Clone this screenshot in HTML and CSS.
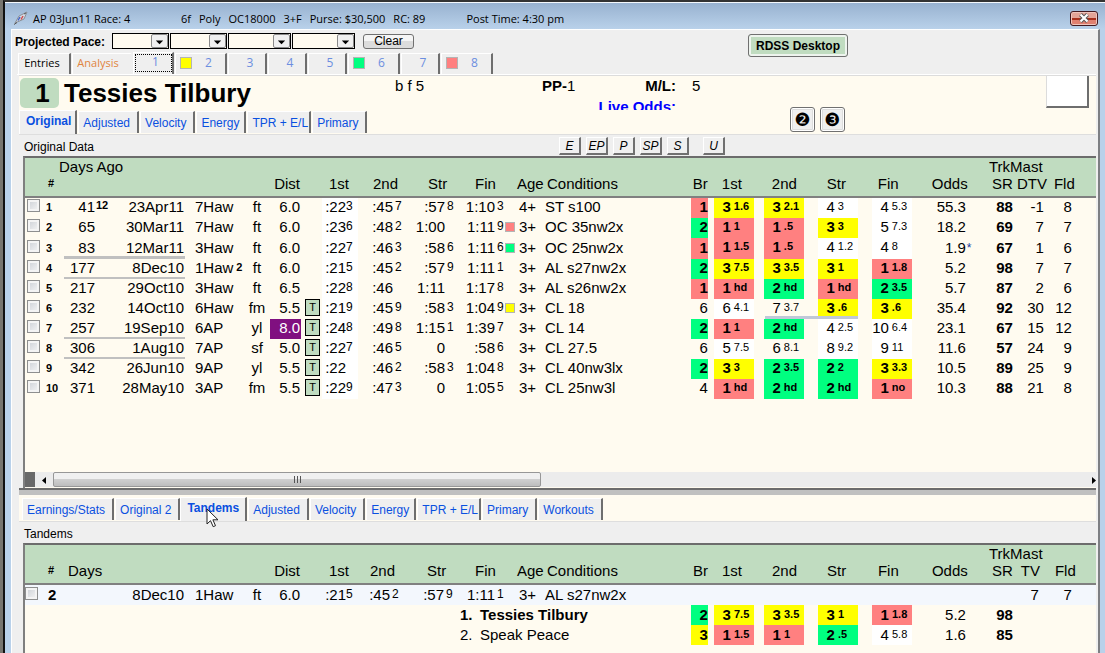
FILE: index.html
```
<!DOCTYPE html>
<html lang="en">
<head>
  <meta charset="UTF-8">
  <title>AP 03Jun11 Race: 4</title>
  <link rel="stylesheet" href="styles.css">
</head>
<body>

<div class="window">

  <header class="titlebar">
    <svg class="app-icon" width="14" height="14" viewBox="0 0 14 14">
      <path d="M1 12 L5 5 L13 1 L10 8 Z" fill="#d5dce4" stroke="#8a8f96"/>
      <path d="M4 9.500 L6 6" stroke="#3f62c8" stroke-width="1.500"/>
      <path d="M7 8.500 L9 5" stroke="#d04a4a" stroke-width="1.500"/>
      <path d="M0 13.500 L3 11.500 M10 3 L12 2" stroke="#555"/>
    </svg>
    <span class="race-id">AP 03Jun11 Race: 4</span>
    <div class="race-facts">
      <span>6f</span><span>Poly</span><span>OC18000</span><span>3+F</span><span>Purse: $30,500</span><span>RC: 89</span>
    </div>
    <span class="post">Post Time: 4:30 pm</span>
    <button class="close" title="Close">
      <svg width="12" height="10" viewBox="0 0 12 10">
        <path d="M2.500 1.500 L9.500 8.500 M9.500 1.500 L2.500 8.500" stroke="#555" stroke-width="4"/>
        <path d="M2.500 1.500 L9.500 8.500 M9.500 1.500 L2.500 8.500" stroke="#fff" stroke-width="2.200"/>
      </svg>
    </button>
  </header>

  <main class="client">

    <div class="toolbar">
      <span class="pace-label" id="pace">Projected Pace:</span>
      <span class="combo"><select aria-labelledby="pace"><option></option></select><svg viewBox="0 0 16 13"><path d="M4 6h8l-4 4z"/></svg></span>
      <span class="combo"><select aria-labelledby="pace"><option></option></select><svg viewBox="0 0 16 13"><path d="M4 6h8l-4 4z"/></svg></span>
      <span class="combo wide"><select aria-labelledby="pace"><option></option></select><svg viewBox="0 0 16 13"><path d="M4 6h8l-4 4z"/></svg></span>
      <span class="combo wide"><select aria-labelledby="pace"><option></option></select><svg viewBox="0 0 16 13"><path d="M4 6h8l-4 4z"/></svg></span>
      <button class="clear">Clear</button>
      <button class="desktop">RDSS Desktop</button>
    </div>

    <nav class="tabs race-tabs">
      <button class="tab entries">Entries</button>
      <button class="tab analysis">Analysis</button>
      <button class="tab horse active">1</button>
      <button class="tab horse marked"><i class="mark yellow"></i>2</button>
      <button class="tab horse">3</button>
      <button class="tab horse">4</button>
      <button class="tab horse">5</button>
      <button class="tab horse marked"><i class="mark green"></i>6</button>
      <button class="tab horse">7</button>
      <button class="tab horse marked"><i class="mark red"></i>8</button>
    </nav>

    <section class="runner">
      <div class="runner-main">
        <div class="nameplate"><span class="badge">1</span><h1>Tessies Tilbury</h1></div>
        <nav class="tabs view-tabs">
          <button class="tab active">Original</button>
          <button class="tab">Adjusted</button>
          <button class="tab">Velocity</button>
          <button class="tab snug">Energy</button>
          <button class="tab tight">TPR + E/L</button>
          <button class="tab">Primary</button>
        </nav>
      </div>
      <span class="breed">b f 5</span>
      <span class="pp"><b>PP-</b>1</span>
      <div class="odds-labels">
        <b>M/L:</b>
        <b class="live">Live Odds:</b>
      </div>
      <span class="ml">5</span>
      <div class="views">
        <button>&#10103;</button>
        <button>&#10104;</button>
      </div>
      <div class="silks"></div>
    </section>

    <div class="caption">
      <span>Original Data</span>
      <div class="styles">
        <button>E</button>
        <button>EP</button>
        <button>P</button>
        <button>SP</button>
        <button>S</button>
        <button>U</button>
      </div>
    </div>

    <div class="list main-list">
      <table>
        <colgroup>
          <col class="c-check"><col class="c-num"><col class="c-days"><col class="c-note"><col class="c-date"><col class="c-track"><col class="c-surf"><col class="c-dist"><col class="c-turf">
          <col class="c-t1"><col class="c-t2"><col class="c-t3"><col class="c-t4"><col class="c-mark"><col class="c-age"><col class="c-cond"><col class="c-br">
          <col class="c-p1"><col class="c-p2"><col class="c-p3"><col class="c-p3"><col class="c-odds"><col class="c-star"><col class="c-sr"><col class="c-dtv"><col class="c-fld"><col class="c-end">
        </colgroup>
        <thead>
          <tr class="upper">
            <th></th><th colspan="22" class="ago">Days Ago</th><th colspan="4" class="trk">TrkMast</th>
          </tr>
          <tr>
            <th></th><th class="hash">#</th><th colspan="5"></th><th class="dist">Dist</th><th></th>
            <th class="h1">1st</th><th class="h2">2nd</th><th class="h3">Str</th><th class="h4">Fin</th><th></th><th>Age</th><th class="hc">Conditions</th><th class="r">Br</th>
            <th class="q1">1st</th><th class="q2">2nd</th><th class="q3">Str</th><th class="q4">Fin</th><th colspan="2" class="hodds">Odds</th><th class="r">SR</th><th class="hdtv">DTV</th><th class="hfld">Fld</th><th></th>
          </tr>
        </thead>
        <tbody>
          <tr>
            <td><input type="checkbox" aria-label="Race 1"></td><td class="num">1</td><td class="r">41</td><td class="note">12</td><td class="date">23Apr11</td><td class="track">7Haw</td><td class="surf">ft</td><td class="dist">6.0</td><td></td>
            <td class="t t1"><span>:22</span><sup>3</sup></td><td class="t t2"><span>:45</span><sup>7</sup></td><td class="t t3"><span>:57</span><sup>8</sup></td><td class="t t4"><span>1:10</span><sup>3</sup></td><td></td><td class="age">4+</td><td class="cond">ST s100</td><td class="br red">1</td>
            <td class="p p1"><div class="yellow"><span>3</span><sup>1.6</sup></div></td><td class="p p2"><div class="yellow"><span>3</span><sup>2.1</sup></div></td><td class="p p3"><div class="white"><span>4</span><sup>3</sup></div></td><td class="p p3"><div class="white"><span>4</span><sup>5.3</sup></div></td>
            <td class="r">55.3</td><td></td><td class="sr">88</td><td class="r">-1</td><td class="r">8</td><td></td>
          </tr>
          <tr>
            <td><input type="checkbox" aria-label="Race 2"></td><td class="num">2</td><td class="r">65</td><td></td><td class="date">30Mar11</td><td class="track">7Haw</td><td class="surf">ft</td><td class="dist">6.0</td><td></td>
            <td class="t t1"><span>:23</span><sup>6</sup></td><td class="t t2"><span>:48</span><sup>2</sup></td><td class="t t3"><span>1:00</span></td><td class="t t4"><span>1:11</span><sup>9</sup></td><td><i class="mark red"></i></td><td class="age">3+</td><td class="cond">OC 35nw2x</td><td class="br green">2</td>
            <td class="p p1"><div class="red"><span>1</span><sup>1</sup></div></td><td class="p p2"><div class="red"><span>1</span><sup>.5</sup></div></td><td class="p p3"><div class="yellow"><span>3</span><sup>3</sup></div></td><td class="p p3"><div class="white"><span>5</span><sup>7.3</sup></div></td>
            <td class="r">18.2</td><td></td><td class="sr">69</td><td class="r">7</td><td class="r">7</td><td></td>
          </tr>
          <tr class="month">
            <td><input type="checkbox" aria-label="Race 3"></td><td class="num">3</td><td class="r gap">83</td><td class="gap"></td><td class="date gap">12Mar11</td><td class="track">3Haw</td><td class="surf">ft</td><td class="dist">6.0</td><td></td>
            <td class="t t1"><span>:22</span><sup>7</sup></td><td class="t t2"><span>:46</span><sup>3</sup></td><td class="t t3"><span>:58</span><sup>6</sup></td><td class="t t4"><span>1:11</span><sup>6</sup></td><td><i class="mark green"></i></td><td class="age">3+</td><td class="cond">OC 25nw2x</td><td class="br red">1</td>
            <td class="p p1"><div class="red"><span>1</span><sup>1.5</sup></div></td><td class="p p2"><div class="red"><span>1</span><sup>.5</sup></div></td><td class="p p3"><div class="white"><span>4</span><sup>1.2</sup></div></td><td class="p p3"><div class="white"><span>4</span><sup>8</sup></div></td>
            <td class="r">1.9</td><td class="star">*</td><td class="sr">67</td><td class="r">1</td><td class="r">6</td><td></td>
          </tr>
          <tr>
            <td><input type="checkbox" aria-label="Race 4"></td><td class="num">4</td><td class="r line">177</td><td class="line"></td><td class="date line">8Dec10</td><td class="track">1Haw<sup>2</sup></td><td class="surf">ft</td><td class="dist">6.0</td><td></td>
            <td class="t t1"><span>:21</span><sup>5</sup></td><td class="t t2"><span>:45</span><sup>2</sup></td><td class="t t3"><span>:57</span><sup>9</sup></td><td class="t t4"><span>1:11</span><sup>1</sup></td><td></td><td class="age">3+</td><td class="cond">AL s27nw2x</td><td class="br green">2</td>
            <td class="p p1"><div class="yellow"><span>3</span><sup>7.5</sup></div></td><td class="p p2"><div class="yellow"><span>3</span><sup>3.5</sup></div></td><td class="p p3"><div class="yellow"><span>3</span><sup>1</sup></div></td><td class="p p3"><div class="red"><span>1</span><sup>1.8</sup></div></td>
            <td class="r">5.2</td><td></td><td class="sr">98</td><td class="r">7</td><td class="r">7</td><td></td>
          </tr>
          <tr>
            <td><input type="checkbox" aria-label="Race 5"></td><td class="num">5</td><td class="r">217</td><td></td><td class="date">29Oct10</td><td class="track">3Haw</td><td class="surf">ft</td><td class="dist">6.5</td><td></td>
            <td class="t t1"><span>:22</span><sup>8</sup></td><td class="t t2"><span>:46</span></td><td class="t t3"><span>1:11</span></td><td class="t t4"><span>1:17</span><sup>8</sup></td><td></td><td class="age">3+</td><td class="cond">AL s26nw2x</td><td class="br red">1</td>
            <td class="p p1"><div class="red"><span>1</span><sup>hd</sup></div></td><td class="p p2"><div class="green"><span>2</span><sup>hd</sup></div></td><td class="p p3"><div class="red"><span>1</span><sup>hd</sup></div></td><td class="p p3"><div class="green"><span>2</span><sup>3.5</sup></div></td>
            <td class="r">5.7</td><td></td><td class="sr">87</td><td class="r">2</td><td class="r">6</td><td></td>
          </tr>
          <tr>
            <td><input type="checkbox" aria-label="Race 6"></td><td class="num">6</td><td class="r">232</td><td></td><td class="date">14Oct10</td><td class="track">6Haw</td><td class="surf">fm</td><td class="dist">5.5</td><td><span class="turf">T</span></td>
            <td class="t t1"><span>:21</span><sup>9</sup></td><td class="t t2"><span>:45</span><sup>9</sup></td><td class="t t3"><span>:58</span><sup>3</sup></td><td class="t t4"><span>1:04</span><sup>9</sup></td><td><i class="mark yellow"></i></td><td class="age">3+</td><td class="cond">CL 18</td><td class="br">6</td>
            <td class="p p1"><div class="white"><span>6</span><sup>4.1</sup></div></td><td class="p p2 trouble"><div><span>7</span><sup>3.7</sup></div></td><td class="p p3 trouble"><div class="yellow"><span>3</span><sup>.6</sup></div></td><td class="p p3"><div class="yellow"><span>3</span><sup>.6</sup></div></td>
            <td class="r">35.4</td><td></td><td class="sr">92</td><td class="r">30</td><td class="r">12</td><td></td>
          </tr>
          <tr>
            <td><input type="checkbox" aria-label="Race 7"></td><td class="num">7</td><td class="r line">257</td><td class="line"></td><td class="date line">19Sep10</td><td class="track">6AP</td><td class="surf">yl</td><td class="dist route">8.0</td><td><span class="turf">T</span></td>
            <td class="t t1"><span>:24</span><sup>8</sup></td><td class="t t2"><span>:49</span><sup>8</sup></td><td class="t t3"><span>1:15</span><sup>1</sup></td><td class="t t4"><span>1:39</span><sup>7</sup></td><td></td><td class="age">3+</td><td class="cond">CL 14</td><td class="br green">2</td>
            <td class="p p1"><div class="red"><span>1</span><sup>1</sup></div></td><td class="p p2"><div class="green"><span>2</span><sup>hd</sup></div></td><td class="p p3"><div class="white"><span>4</span><sup>2.5</sup></div></td><td class="p p3"><div class="white"><span>10</span><sup>6.4</sup></div></td>
            <td class="r">23.1</td><td></td><td class="sr">67</td><td class="r">15</td><td class="r">12</td><td></td>
          </tr>
          <tr>
            <td><input type="checkbox" aria-label="Race 8"></td><td class="num">8</td><td class="r line">306</td><td class="line"></td><td class="date line">1Aug10</td><td class="track">7AP</td><td class="surf">sf</td><td class="dist">5.0</td><td><span class="turf">T</span></td>
            <td class="t t1"><span>:22</span><sup>7</sup></td><td class="t t2"><span>:46</span><sup>5</sup></td><td class="t t3"><span>0</span></td><td class="t t4"><span>:58</span><sup>6</sup></td><td></td><td class="age">3+</td><td class="cond">CL 27.5</td><td class="br">6</td>
            <td class="p p1"><div class="white"><span>5</span><sup>7.5</sup></div></td><td class="p p2"><div><span>6</span><sup>8.1</sup></div></td><td class="p p3"><div class="white"><span>8</span><sup>9.2</sup></div></td><td class="p p3"><div class="white"><span>9</span><sup>11</sup></div></td>
            <td class="r">11.6</td><td></td><td class="sr">57</td><td class="r">24</td><td class="r">9</td><td></td>
          </tr>
          <tr>
            <td><input type="checkbox" aria-label="Race 9"></td><td class="num">9</td><td class="r">342</td><td></td><td class="date">26Jun10</td><td class="track">9AP</td><td class="surf">yl</td><td class="dist">5.5</td><td><span class="turf">T</span></td>
            <td class="t t1"><span>:22</span></td><td class="t t2"><span>:46</span><sup>2</sup></td><td class="t t3"><span>:58</span><sup>3</sup></td><td class="t t4"><span>1:04</span><sup>8</sup></td><td></td><td class="age">3+</td><td class="cond">CL 40nw3lx</td><td class="br green">2</td>
            <td class="p p1"><div class="yellow"><span>3</span><sup>3</sup></div></td><td class="p p2"><div class="green"><span>2</span><sup>3.5</sup></div></td><td class="p p3"><div class="green"><span>2</span><sup>2</sup></div></td><td class="p p3"><div class="yellow"><span>3</span><sup>3.3</sup></div></td>
            <td class="r">10.5</td><td></td><td class="sr">89</td><td class="r">25</td><td class="r">9</td><td></td>
          </tr>
          <tr>
            <td><input type="checkbox" aria-label="Race 10"></td><td class="num">10</td><td class="r">371</td><td></td><td class="date">28May10</td><td class="track">3AP</td><td class="surf">fm</td><td class="dist">5.5</td><td><span class="turf">T</span></td>
            <td class="t t1"><span>:22</span><sup>9</sup></td><td class="t t2"><span>:47</span><sup>3</sup></td><td class="t t3"><span>0</span></td><td class="t t4"><span>1:05</span><sup>5</sup></td><td></td><td class="age">3+</td><td class="cond">CL 25nw3l</td><td class="br">4</td>
            <td class="p p1"><div class="red"><span>1</span><sup>hd</sup></div></td><td class="p p2"><div class="green"><span>2</span><sup>hd</sup></div></td><td class="p p3"><div class="green"><span>2</span><sup>hd</sup></div></td><td class="p p3"><div class="red"><span>1</span><sup>no</sup></div></td>
            <td class="r">10.3</td><td></td><td class="sr">88</td><td class="r">21</td><td class="r">8</td><td></td>
          </tr>
        </tbody>
      </table>

      <div class="scrollbar">
        <span class="stub"></span>
        <button title="Scroll left"><svg width="4" height="7" viewBox="0 0 4 7"><path d="M4 0v7L0 3.500z"/></svg></button>
        <div class="track-bar"><div class="thumb"><i></i><i></i><i></i></div></div>
        <button class="right" title="Scroll right"><svg width="4" height="7" viewBox="0 0 4 7"><path d="M0 0v7L4 3.500z"/></svg></button>
      </div>
    </div>

    <div class="splitter"></div>

    <nav class="tabs view-tabs lower-tabs">
      <button class="tab">Earnings/Stats</button>
      <button class="tab">Original 2</button>
      <button class="tab active">Tandems
        <svg class="cursor" width="13" height="20" viewBox="0 0 13 20"><path d="M1 1v15l3.500-3.300 2.700 6 2.300-1-2.600-5.900H12z" fill="#fff" stroke="#222"/></svg>
      </button>
      <button class="tab">Adjusted</button>
      <button class="tab">Velocity</button>
      <button class="tab snug">Energy</button>
      <button class="tab tight">TPR + E/L</button>
      <button class="tab">Primary</button>
      <button class="tab">Workouts</button>
    </nav>

    <div class="caption"><span>Tandems</span></div>

    <div class="list tandem-list">
      <table>
        <colgroup>
          <col class="c-check"><col class="c-num"><col class="c-days"><col class="c-note"><col class="c-date"><col class="c-track"><col class="c-surf"><col class="c-dist"><col class="c-turf">
          <col class="c-t1"><col class="c-t2"><col class="c-t3"><col class="c-t4"><col class="c-mark"><col class="c-age"><col class="c-cond"><col class="c-br">
          <col class="c-p1"><col class="c-p2"><col class="c-p3"><col class="c-p3"><col class="c-odds"><col class="c-star"><col class="c-sr"><col class="c-dtv"><col class="c-fld"><col class="c-end">
        </colgroup>
        <thead>
          <tr class="upper">
            <th colspan="23"></th><th colspan="4" class="trk">TrkMast</th>
          </tr>
          <tr>
            <th></th><th class="hash">#</th><th colspan="5" class="days">Days</th><th class="dist">Dist</th><th></th>
            <th class="h1">1st</th><th class="h2">2nd</th><th class="h3">Str</th><th class="h4">Fin</th><th></th><th>Age</th><th class="hc">Conditions</th><th class="r">Br</th>
            <th class="q1">1st</th><th class="q2">2nd</th><th class="q3">Str</th><th class="q4">Fin</th><th colspan="2" class="hodds">Odds</th><th class="r">SR</th><th class="r">TV</th><th class="hfld">Fld</th><th></th>
          </tr>
        </thead>
        <tbody>
          <tr class="selected">
            <td><input type="checkbox" aria-label="Tandem race 2"></td><td class="num">2</td><td></td><td></td><td class="date">8Dec10</td><td class="track">1Haw</td><td class="surf">ft</td><td class="dist">6.0</td><td></td>
            <td class="t t1"><span>:21</span><sup>5</sup></td><td class="t t2"><span>:45</span><sup>2</sup></td><td class="t t3"><span>:57</span><sup>9</sup></td><td class="t t4"><span>1:11</span><sup>1</sup></td><td></td><td class="age">3+</td><td class="cond">AL s27nw2x</td><td></td>
            <td></td><td></td><td></td><td></td><td></td><td></td><td></td><td class="r">7</td><td class="r">7</td><td></td>
          </tr>
          <tr>
            <td colspan="12"></td><td colspan="4" class="runner-name"><b><span>1.</span>Tessies Tilbury</b></td><td class="br green">2</td>
            <td class="p p1"><div class="yellow"><span>3</span><sup>7.5</sup></div></td><td class="p p2"><div class="yellow"><span>3</span><sup>3.5</sup></div></td><td class="p p3"><div class="yellow"><span>3</span><sup>1</sup></div></td><td class="p p3"><div class="red"><span>1</span><sup>1.8</sup></div></td>
            <td class="r">5.2</td><td></td><td class="sr">98</td><td></td><td></td><td></td>
          </tr>
          <tr>
            <td colspan="12"></td><td colspan="4" class="runner-name"><span>2.</span>Speak Peace</td><td class="br yellow">3</td>
            <td class="p p1"><div class="red"><span>1</span><sup>1.5</sup></div></td><td class="p p2"><div class="red"><span>1</span><sup>1</sup></div></td><td class="p p3"><div class="green"><span>2</span><sup>.5</sup></div></td><td class="p p3"><div class="white"><span>4</span><sup>5.8</sup></div></td>
            <td class="r">1.6</td><td></td><td class="sr">85</td><td></td><td></td><td></td>
          </tr>
        </tbody>
      </table>
    </div>

  </main>
</div>

</body>
</html>
```
FILE: styles.css
```
* {
  box-sizing: border-box;
}

body {
  margin: 0;
  background-color: #77756f;
  font-family: "Liberation Sans", Arial, sans-serif;
  font-size: 12px;
  color: #000;
}

button {
  font-family: inherit;
  font-size: 12px;
  color: #000;
  padding: 0;
  margin: 0;
}

/* window frame */
.window {
  min-width: 1102px;
  min-height: 100vh;
  margin-left: 3px;
  border-left: 2px solid #111;
  border-top: 2px solid #333;
  background-color: #b9d1ea;
  display: flex;
  flex-direction: column;
}

.titlebar {
  height: 27px;
  border-top: 1px solid #f4f8fc;
  background: linear-gradient(#98b2d0, #b9d1ea);
  display: flex;
  align-items: center;
  padding: 4px 7px 0 9px;
  font-family: "Open Sans", sans-serif;
  font-size: 11px;
  white-space: nowrap;
}

.app-icon {
  fill: none;
  margin-right: 5px;
}

.race-id {
  width: 148px;
}

.race-facts {
  display: flex;
  gap: 8px;
}

.post {
  margin-left: 41px;
}

.close {
  width: 28px;
  height: 15px;
  margin-left: auto;
  border: 1px solid #43191f;
  border-radius: 3px;
  background: linear-gradient(#e3a497 0 45%, #a8301c 45% 65%, #e08070 65%);
  box-shadow: inset 0 0 0 1px #efc4bb;
  display: flex;
  align-items: center;
  justify-content: center;
}

.client {
  flex: 1;
  margin: 0 5px 0 6px;
  padding: 0 2px 0 7px;
  border-left: 1px solid #fff;
  border-top: 1px solid #fff;
  border-right: 2px solid #7d7f83;
  background-color: #efefef;
  display: flex;
  flex-direction: column;
}

/* toolbar */
.toolbar {
  height: 23px;
  margin-left: -4px;
  padding-top: 3px;
  display: flex;
  align-items: flex-start;
  gap: 1px;
}

.pace-label {
  width: 96px;
  line-height: 18px;
  font-weight: bold;
}

.combo {
  position: relative;
  width: 57px;
  height: 16px;
}

.combo.wide {
  width: 63px;
}

.combo select {
  appearance: none;
  display: block;
  width: 100%;
  height: 16px;
  border: 1px solid #000;
  border-radius: 0;
  background-color: #fffbf0;
}

.combo svg {
  position: absolute;
  right: 1px;
  top: 1px;
  width: 17px;
  height: 14px;
  border: 1px solid #8a8a8a;
  border-radius: 2px;
  background-color: #f0f0f0;
  pointer-events: none;
}

.clear {
  width: 51px;
  height: 15px;
  margin: 1px 0 0 7px;
  border: 1px solid #707070;
  border-radius: 3px;
  background: linear-gradient(#f5f5f5 50%, #dcdcdc 50%);
  line-height: 13px;
}

.desktop {
  width: 100px;
  height: 23px;
  margin: 1px 0 0 333px;
  border: 1px solid #707070;
  border-radius: 3px;
  background-color: #c0dcc0;
  box-shadow: inset 0 0 0 2px #eef4ee;
  font-weight: bold;
}

/* tabs */
.tabs {
  display: flex;
  align-items: flex-end;
}

.tab {
  height: 22px;
  margin: 0 0 1px 1px;
  padding: 0 7px 0 4px;
  border: 1px solid #fff;
  border-right: 2px solid #6e6e6e;
  border-bottom: none;
  background-color: #efefef;
  position: relative;
  white-space: nowrap;
}

.race-tabs {
  height: 22px;
  margin-left: -2px;
  border-bottom: 1px solid #fff;
  font-family: "Open Sans", sans-serif;
}

.race-tabs .tab {
  height: 21px;
  margin-bottom: 0;
  padding: 0 4px 3px 0;
  font-size: 11px;
}

.race-tabs .entries {
  width: 53px;
}

.race-tabs .analysis {
  width: 60px;
  padding-right: 7px;
  color: #e08440;
  border-right-color: #efefef;
}

.race-tabs .horse {
  width: 39px;
  padding: 0 0 3px 6px;
  color: #6c8ee0;
  font-size: 12px;
}

.race-tabs .horse.active {
  width: 41px;
  height: 22px;
  padding: 0 0 6px 5px;
  outline: 1px dotted #000;
  outline-offset: -3px;
}

.race-tabs .horse.marked {
  width: 52px;
  padding-left: 16px;
}

.race-tabs .mark {
  position: absolute;
  left: 4px;
  top: 3px;
  width: 12px;
  height: 12px;
}

.mark {
  display: block;
  width: 10px;
  height: 10px;
  border: 1px solid #b4b4b4;
}

.yellow { background-color: #ffff00; }
.green { background-color: #00ff80; }
.red { background-color: #ff8080; }
.white { background-color: #fff; }

.view-tabs .tab {
  color: #0a50e0;
}

.view-tabs .active {
  height: 24px;
  margin: 0;
  padding: 0 4px 3px 6px;
  font-weight: bold;
}

.view-tabs .snug {
  padding-right: 5px;
}

.view-tabs .tight {
  padding-right: 1px;
}

/* runner heading */
.runner {
  height: 60px;
  border-top: 1px solid #dcdcdc;
  border-bottom: 1px solid #dedede;
  background-color: #fffbf0;
  display: flex;
  align-items: flex-start;
  font-size: 15px;
  line-height: 20px;
}

.runner-main {
  width: 376px;
  height: 58px;
  display: flex;
  flex-direction: column;
  justify-content: space-between;
}

.nameplate {
  display: flex;
  align-items: center;
  gap: 5px;
  padding: 2px 0 0 1px;
}

.badge {
  width: 39px;
  height: 30px;
  padding-left: 6px;
  border-radius: 5px;
  background-color: #c0dcc0;
  font-size: 26px;
  font-weight: bold;
  line-height: 30px;
  text-align: center;
}

h1 {
  margin: 0;
  font-size: 26px;
  line-height: 30px;
}

.breed {
  width: 147px;
}

.pp {
  width: 43px;
}

.odds-labels {
  width: 91px;
  height: 34px;
  overflow: hidden;
  display: flex;
  flex-direction: column;
  gap: 1px;
  text-align: right;
}

.live {
  color: #0000ff;
}

.ml {
  margin-left: 16px;
  width: 98px;
}

.views {
  display: flex;
  gap: 5px;
  margin-top: 31px;
}

.views button {
  width: 25px;
  height: 25px;
  border: 1px solid #707070;
  border-radius: 3px;
  background-color: #efefef;
  box-shadow: inset 0 0 0 1px #fff, inset 0 0 0 2px #ddd;
  font-family: "DejaVu Sans", sans-serif;
  font-size: 18px;
  line-height: 20px;
}

.silks {
  width: 43px;
  height: 32px;
  margin-left: auto;
  margin-right: 7px;
  border: 1px solid #dcdcdc;
  border-right: 2px solid #6e6e6e;
  border-bottom: 2px solid #6e6e6e;
  border-top: none;
  background-color: #fff;
}

.caption {
  height: 21px;
  padding-left: 5px;
  display: flex;
  line-height: 25px;
}

.caption > span {
  width: 535px;
}

.styles {
  display: flex;
  gap: 5px;
  padding-top: 2px;
}

.styles button {
  width: 22px;
  height: 18px;
  border: 1px solid #fff;
  border-right: 2px solid #707070;
  border-bottom: 2px solid #707070;
  background-color: #efefef;
  font-style: italic;
  line-height: 17px;
}

.styles button:last-child {
  margin-left: 9px;
}

/* race lists */
.list {
  margin-left: 4px;
  border-left: 2px solid #7f7f7f;
  border-top: 2px solid #6c6c6c;
  background-color: #fffbf0;
  display: flex;
  flex-direction: column;
  justify-content: space-between;
}

.main-list {
  flex: 1;
  padding-bottom: 1px;
}

.tandem-list {
  padding-bottom: 8px;
}

table {
  width: 100%;
  table-layout: fixed;
  border-collapse: separate;
  border-spacing: 0;
  font-size: 15px;
  line-height: 18px;
}

.c-check { width: 18px; }
.c-num { width: 21px; }
.c-days { width: 32px; }
.c-note { width: 16px; }
.c-date { width: 73px; }
.c-track { width: 55px; }
.c-surf { width: 30px; }
.c-dist { width: 31px; }
.c-turf { width: 21px; }
.c-t1 { width: 36px; }
.c-t2 { width: 52px; }
.c-t3 { width: 48px; }
.c-t4 { width: 47px; }
.c-mark { width: 12px; }
.c-age { width: 26px; }
.c-br { width: 17px; }
.c-p1 { width: 46px; }
.c-p2 { width: 50px; }
.c-p3 { width: 54px; }
.c-odds { width: 55px; }
.c-star { width: 13px; }
.c-sr { width: 33px; }
.c-dtv { width: 32px; }
.c-fld { width: 28px; }
.c-end { width: 23px; }

th {
  height: 23px;
  padding: 0;
  background-color: #c0dcc0;
  border-bottom: 2px solid #808080;
  font-weight: normal;
  line-height: 17px;
  text-align: left;
  vertical-align: top;
  white-space: nowrap;
}

.upper th {
  height: 17px;
  border-bottom: none;
}

td {
  height: 20px;
  padding: 0 0 2px;
  white-space: nowrap;
}

.month td {
  height: 21px;
}

.r, .date, .dist, .sr, .br {
  text-align: right;
}

.ago { padding-left: 16px; }
.trk { padding-left: 9px; }
.days { padding-left: 4px; }
.hash { padding-left: 5px; font-size: 11px; font-weight: bold; }
.h1 { padding-left: 7px; }
.h2 { padding-left: 15px; }
.h3 { padding-left: 18px; }
.h4 { padding-left: 17px; }
.hc { padding-left: 4px; }
.q1 { padding-left: 14px; }
.q2 { padding-left: 18px; }
.q3 { padding-left: 23px; }
.q4 { padding-left: 20px; }
.hodds { padding-left: 20px; }
.hdtv { padding-left: 4px; }
.hfld { padding-left: 9px; }

input[type="checkbox"] {
  appearance: none;
  display: block;
  width: 13px;
  height: 13px;
  margin: 0 0 3px 2px;
  border: 1px solid #8e8f8f;
  background: linear-gradient(135deg, #cbcfd5, #f6f6f6);
  box-shadow: inset 0 0 0 2px #f4f4f4;
}

.num {
  padding-left: 3px;
  font-size: 11px;
  font-weight: bold;
}

sup {
  font-size: 12px;
  line-height: 12px;
  vertical-align: 2px;
}

.note, .track sup {
  font-size: 11px;
  font-weight: bold;
}

.note {
  padding-bottom: 6px;
  line-height: 14px;
}

.days, .date { padding-right: 1px; }
td.r { padding-right: 1px; }
.track { padding-left: 10px; }
.track sup { margin-left: 3px; }
.surf { padding-left: 4px; text-align: center; }
.dist { padding-right: 1px; }

.gap { box-shadow: inset 0 -3px #c0c0c0; }
.line { box-shadow: inset 0 -2px #c0c0c0; }

.route {
  background-color: #801080;
  color: #fff;
}

.turf {
  display: block;
  width: 15px;
  height: 17px;
  margin: 0 0 1px 4px;
  border: 1px solid #000;
  background-color: #c0dcc0;
  font-size: 11px;
  line-height: 15px;
  text-align: center;
}

.t span, .p span {
  display: inline-block;
  text-align: right;
}

.t sup { margin-left: 2px; }
.t1 span { width: 24px; }
.t2 span { width: 35px; }
.t3 span { width: 35px; }
.t4 span { width: 37px; }
.t1 { background-color: #fff; }
.t1 sup { margin-left: 0; }

.age { padding-left: 2px; }
.cond { padding-left: 2px; }

.p {
  padding: 0;
  position: relative;
}

.p div {
  height: 20px;
}

.month .p div {
  height: 21px;
}

.p span { width: 17px; }

.p sup {
  margin-left: 3px;
  font-size: 11px;
}

.p1 { padding-left: 6px; }
.p2 { padding-left: 10px; }
.p3 { padding-left: 14px; }

/* places in the money are bold */
.p .yellow, .p .green, .p .red,
.br.yellow, .br.green, .br.red, .sr {
  font-weight: bold;
}

/* trouble line under two calls */
.trouble::after {
  content: "";
  position: absolute;
  left: 0;
  right: 0;
  bottom: 0;
  height: 3px;
  background-color: #c0c8d8;
}

.p2.trouble::after {
  left: 11px;
}

.star {
  color: #2040a0;
  font-size: 12px;
}

.selected td {
  background-color: #f3f7fd;
}

.tandem-list td:not(.p) {
  padding-top: 1px;
  padding-bottom: 1px;
}

.tandem-list .p div {
  line-height: 20px;
}

.tandem-list .num {
  padding-left: 5px;
  font-size: 15px;
}

.tandem-list input[type="checkbox"] {
  margin-left: 0;
}

.tandem-list .c-t1 { width: 33px; }
.tandem-list .c-t3 { width: 51px; }
.tandem-list .t3 span { width: 37px; }
.tandem-list .h3 { padding-left: 20px; }
.tandem-list .c-dtv { width: 27px; }
.tandem-list .c-fld { width: 33px; }
.tandem-list .hfld { padding-left: 15px; }

.runner-name {
  padding-left: 2px;
}

.runner-name span {
  display: inline-block;
  width: 20px;
}

/* horizontal scrollbar */
.scrollbar {
  height: 15px;
  display: flex;
  background-color: #ececec;
}

.stub {
  width: 10px;
  background-color: #696969;
}

.scrollbar button {
  width: 18px;
  border: none;
  background: none;
  line-height: 10px;
}

.scrollbar .right {
  width: 4px;
}

.track-bar {
  flex: 1;
}

.thumb {
  width: 47%;
  height: 15px;
  border: 1px solid #979797;
  border-radius: 2px;
  background: linear-gradient(#f0f0f0 45%, #cfcfcf 50%, #bdbdbd);
  display: flex;
  align-items: center;
  justify-content: center;
  gap: 2px;
}

.thumb i {
  width: 1px;
  height: 7px;
  background-color: #555;
}

.splitter {
  height: 7px;
  border-top: 2px solid #6c6c6c;
  background-color: #c0c0c0;
}

.lower-tabs {
  height: 27px;
  padding-left: 2px;
  border-bottom: 1px solid #dedede;
  background-color: #fffbf0;
}

.lower-tabs .active {
  padding-right: 6px;
}

.cursor {
  position: absolute;
  left: 25px;
  top: 10px;
}
```
